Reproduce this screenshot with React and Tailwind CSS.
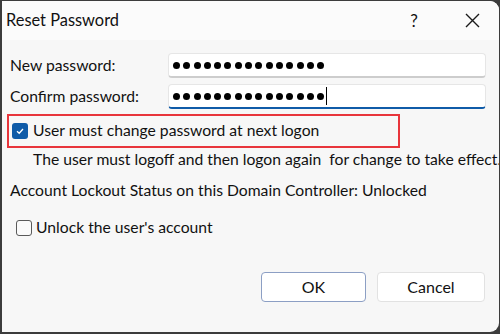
import React from 'react';

const font = { fontFamily: 'Lato, "Noto Sans", sans-serif' };

const Dots = ({ count }) => (
  <div className="flex items-center gap-[3.3px]">
    {Array.from({ length: count }).map((_, i) => (
      <span key={i} className="block w-[7px] h-[7px] rounded-full bg-black" />
    ))}
  </div>
);

const PasswordField = ({ count, focused }) => (
  <div
    className={`w-[318px] h-[25px] bg-white rounded-[4px] border border-[#e6e6e6] flex items-center pl-[4px] ${
      focused ? 'border-b-2 border-b-[#0f5ba8]' : 'border-b-2 border-b-[#cdcdcd]'
    }`}
  >
    <Dots count={count} />
    {focused && <span className="block w-px h-[18px] bg-black ml-[2px]" />}
  </div>
);

export default function App() {
  return (
    <div className="w-[500px] h-[334px] bg-[#3c3c3c] pl-[2px] pt-px pb-[2px] pr-px" style={font}>
      <div className="h-full bg-[#f7f7f7] rounded-r-[9px] overflow-hidden flex flex-col text-[#111]">
        {/* title bar */}
        <div className="h-[39px] shrink-0 bg-[#fbfbfb] flex items-center pl-[4px]">
          <span className="text-[16.4px] leading-none">Reset Password</span>
          <span className="ml-auto text-[17px] leading-none w-[12px] text-center">?</span>
          <svg className="ml-[45px] mr-[19px]" width="15" height="15" viewBox="0 0 15 15">
            <path d="M1 1 L14 14 M14 1 L1 14" stroke="#1a1a1a" strokeWidth="1.4" fill="none" />
          </svg>
        </div>

        <div className="flex flex-col pt-[13px] text-[15.7px] leading-none">
          <div className="flex items-center h-[25px]">
            <span className="pl-[8px] w-[166px]">New password:</span>
            <PasswordField count={15} />
          </div>
          <div className="flex items-center h-[25px] mt-[6px]">
            <span className="pl-[8px] w-[166px]">Confirm password:</span>
            <PasswordField count={15} focused />
          </div>

          <div className="mt-[5px] ml-[5px] w-[393px] h-[34px] border-2 border-[#e8353b] flex items-center pl-[3px]">
            <span className="w-[16px] h-[16px] rounded-[3px] bg-[#0f5ba8] flex items-center justify-center">
              <svg width="10" height="10" viewBox="0 0 10 10">
                <path d="M2 5.2 L4.2 7.3 L8 3" stroke="white" strokeWidth="1.3" fill="none" />
              </svg>
            </span>
            <span className="ml-[5px]">User must change password at next logon</span>
          </div>

          <div className="mt-[2px] pl-[31px] h-[20px] flex items-center whitespace-nowrap">
            The user must logoff and then logon again&nbsp; for change to take effect.
          </div>

          <div className="mt-[11px] pl-[8px] h-[20px] flex items-center whitespace-nowrap">
            Account Lockout Status on this Domain Controller: Unlocked
          </div>

          <div className="mt-[17px] pl-[14px] h-[20px] flex items-center">
            <span className="w-[16px] h-[16px] rounded-[3px] border border-[#5a5a5a] bg-[#fafafa]" />
            <span className="ml-[4px]">Unlock the user's account</span>
          </div>

          <div className="mt-[34px] flex justify-end gap-[11px] pr-[14px]">
            <button className="w-[105px] h-[30px] rounded-[4px] bg-white border border-[#8c9fc4] text-[16px]">
              OK
            </button>
            <button className="w-[108px] h-[30px] rounded-[4px] bg-white border border-[#e2e2e2] text-[16px]">
              Cancel
            </button>
          </div>
        </div>
      </div>
    </div>
  );
}
